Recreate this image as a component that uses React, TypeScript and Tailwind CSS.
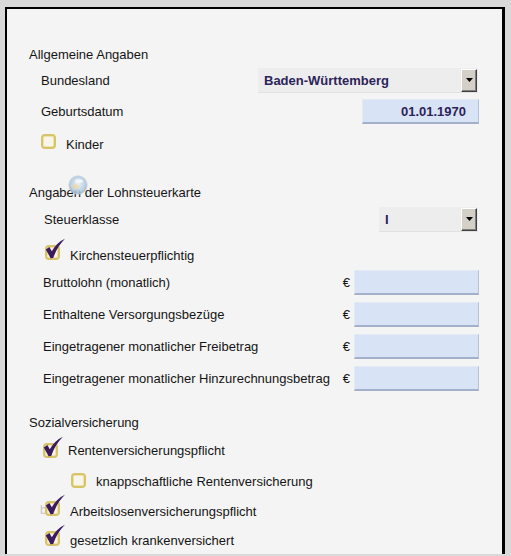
import React from "react";

const font = { fontFamily: '"Liberation Sans", Arial, sans-serif' };

const CheckMark = () => (
  <svg
    className="absolute -left-[1px] -top-[7px] pointer-events-none"
    width="22"
    height="22"
    viewBox="0 0 22 22"
  >
    <path
      d="M1.8 11.5 L5.4 9 L7.8 13.2 C10.8 8 15 3.5 21 0.8 C15.8 5.8 12 12 9.2 20 L6.6 20.3 Z"
      fill="#3a1b5e"
    />
  </svg>
);

const Box = ({ checked, className = "" }: { checked?: boolean; className?: string }) => (
  <span className={`relative inline-block shrink-0 w-[15px] h-[15px] ${className}`}>
    <span className="absolute inset-0 rounded-[4px] border-2 border-[#d6c36a] bg-[#f8f6ec] shadow-[inset_0_0_0_1px_#efe3a8]" />
    {checked && <CheckMark />}
  </span>
);

const DropButton = () => (
  <span className="ml-auto flex h-[23px] w-[16px] items-center justify-center border border-t-white border-l-white border-r-[#404040] border-b-[#404040] bg-[#d4d0c8] shadow-[inset_-1px_-1px_0_#808080]">
    <svg width="7" height="4" viewBox="0 0 7 4">
      <path d="M0 0 H7 L3.5 4 Z" fill="#000" />
    </svg>
  </span>
);

const Select = ({ value, w }: { value: string; w: string }) => (
  <div
    className={`ml-auto flex h-[25px] items-center bg-[#ededed] border-b border-[#e2e2e2] pl-[6px] pr-[1px] ${w}`}
  >
    <span className="text-[13px] font-bold text-[#2c2358]">{value}</span>
    <DropButton />
  </div>
);

const Field = ({ value = "", w = "w-[125px]" }: { value?: string; w?: string }) => (
  <div
    className={`flex h-[25px] items-center justify-end bg-[#d8e3f5] border-t border-l border-t-[#e4eaf5] border-l-[#e4eaf5] border-b-2 border-r border-b-[#a2b0c9] border-r-[#b5c1d6] pr-[12px] -mr-[1px] ${w}`}
  >
    <span className="text-[13px] font-bold text-[#2c2358]">{value}</span>
  </div>
);

const MoneyRow = ({ label, mt }: { label: string; mt: string }) => (
  <div className={`flex h-[25px] items-center ${mt}`}>
    <span className="ml-[36px]">{label}</span>
    <span className="ml-auto mr-[4px]">€</span>
    <Field />
  </div>
);

export default function App() {
  return (
    <div
      className="h-[556px] w-[511px] overflow-hidden bg-[#d9d9d9] pl-[5px] pt-[7px] pb-[2px]"
      style={font}
    >
      <div className="relative flex h-full w-[500px] flex-col border-l-2 border-t-2 border-r-[3px] border-black bg-[#f4f4f4] pr-[24px] pt-[38px] text-[13px] leading-[15px] text-[#141414]">
        {/* Allgemeine Angaben */}
        <div className="flex h-[15px] items-center pl-[22px]">Allgemeine Angaben</div>
        <div className="mt-[6px] flex h-[25px] items-center">
          <span className="ml-[34px]">Bundesland</span>
          <Select value="Baden-Württemberg" w="w-[220px]" />
        </div>
        <div className="mt-[6px] flex h-[25px] items-center">
          <span className="ml-[34px]">Geburtsdatum</span>
          <div className="ml-auto">
            <Field value="01.01.1970" w="w-[117px]" />
          </div>
        </div>
        <div className="mt-[8px] flex h-[24px] items-center">
          <Box className="ml-[34px] -top-[3px]" />
          <span className="ml-[10px]">Kinder</span>
        </div>

        {/* Lohnsteuerkarte */}
        <div className="relative mt-[29px] flex h-[15px] items-center pl-[22px]">
          <span>Angaben der Lohnsteuerkarte</span>
          <svg
            className="absolute left-[61px] -top-[10px] opacity-90"
            width="20"
            height="20"
            viewBox="0 0 20 20"
          >
            <defs>
              <radialGradient id="bub" cx="50%" cy="45%" r="55%">
                <stop offset="0%" stopColor="#e9f1f8" />
                <stop offset="70%" stopColor="#b9cfe2" />
                <stop offset="100%" stopColor="#8fa9c2" />
              </radialGradient>
              <radialGradient id="sun" cx="50%" cy="50%" r="50%">
                <stop offset="0%" stopColor="#f3d488" />
                <stop offset="100%" stopColor="#f3d488" stopOpacity="0" />
              </radialGradient>
            </defs>
            <circle cx="10" cy="10" r="9.2" fill="url(#bub)" stroke="#c9d5e0" strokeWidth="0.8" />
            <ellipse cx="7.5" cy="11.5" rx="5" ry="3.2" fill="url(#sun)" />
            <ellipse cx="11" cy="6" rx="4" ry="2" fill="#ffffff" opacity="0.7" />
          </svg>
        </div>
        <div className="mt-[7px] flex h-[25px] items-center">
          <span className="ml-[37px]">Steuerklasse</span>
          <Select value="I" w="w-[99px]" />
        </div>
        <div className="mt-[11px] flex h-[24px] items-center">
          <Box checked className="ml-[38px] -top-[3px]" />
          <span className="ml-[10px]">Kirchensteuerpflichtig</span>
        </div>
        <MoneyRow label="Bruttolohn (monatlich)" mt="mt-[3px]" />
        <MoneyRow label="Enthaltene Versorgungsbezüge" mt="mt-[7px]" />
        <MoneyRow label="Eingetragener monatlicher Freibetrag" mt="mt-[7px]" />
        <MoneyRow label="Eingetragener monatlicher Hinzurechnungsbetrag" mt="mt-[7px]" />

        {/* Sozialversicherung */}
        <div className="mt-[24px] flex h-[15px] items-center pl-[22px]">Sozialversicherung</div>
        <div className="mt-[8px] flex h-[24px] items-center">
          <Box checked className="ml-[36px]" />
          <span className="ml-[10px]">Rentenversicherungspflicht</span>
        </div>
        <div className="mt-[8px] flex h-[23px] items-center">
          <Box className="ml-[64px] -top-[1px]" />
          <span className="ml-[10px]">knappschaftliche Rentenversicherung</span>
        </div>
        <div className="relative mt-[6px] flex h-[24px] items-center">
          <span className="absolute left-[33px] top-[4px] text-[12px] text-[#c4c4c4]">bla</span>
          <Box checked className="ml-[38px] -top-[3px]" />
          <span className="ml-[10px]">Arbeitslosenversicherungspflicht</span>
        </div>
        <div className="mt-[5px] flex h-[24px] items-center">
          <Box checked className="ml-[38px] -top-[2px]" />
          <span className="ml-[10px]">gesetzlich krankenversichert</span>
        </div>
      </div>
    </div>
  );
}
